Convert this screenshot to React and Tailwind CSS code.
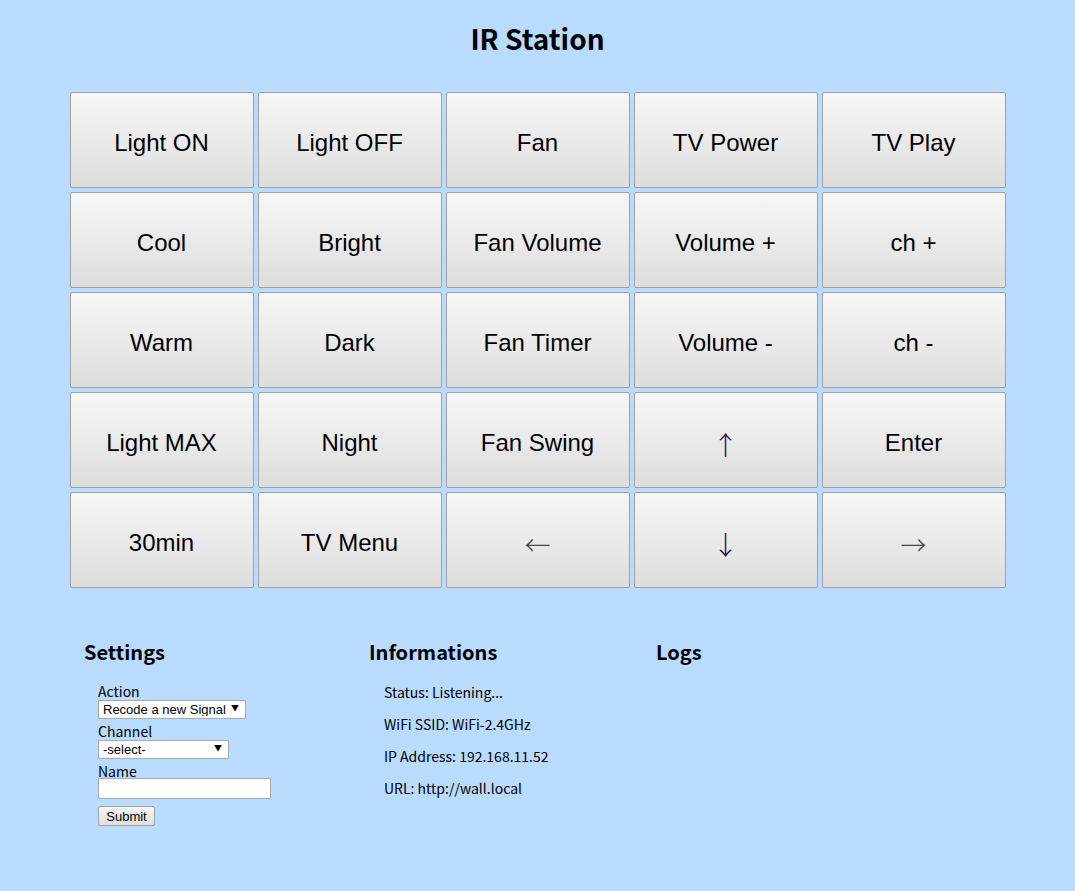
const buttons = [
  ['Light ON', 'Light OFF', 'Fan', 'TV Power', 'TV Play'],
  ['Cool', 'Bright', 'Fan Volume', 'Volume +', 'ch +'],
  ['Warm', 'Dark', 'Fan Timer', 'Volume -', 'ch -'],
  ['Light MAX', 'Night', 'Fan Swing', '↑', 'Enter'],
  ['30min', 'TV Menu', '←', '↓', '→'],
]

const arrowClass = {
  '↑': 'text-[26px] text-[#2a0a4a]',
  '↓': 'text-[26px] text-[#2a0a4a]',
  '←': 'text-[26px] text-[#444]',
  '→': 'text-[26px] text-[#444]',
}

const jp = { fontFamily: '"Noto Sans CJK JP", "DejaVu Sans", sans-serif' }
const arial = { fontFamily: '"Liberation Sans", Arial, sans-serif' }

const SelectBox = ({ value, width }) => (
  <div className={`relative h-[19px] ${width}`}>
    <select
      className="w-full h-full appearance-none bg-white border border-[#a9a9a9] pl-[4px] text-[13px] leading-none text-black"
      style={arial}
      defaultValue={value}
    >
      <option>{value}</option>
    </select>
    <span className="pointer-events-none absolute right-[7px] top-[4px] text-[8px] text-black">▼</span>
  </div>
)

export default function App() {
  return (
    <div className="min-h-screen w-full bg-[#b9dbfe] pt-[20px] pb-[40px]">
      <h1 className="text-center text-[28px] font-bold text-black leading-[36px]" style={jp}>
        IR Station
      </h1>

      {/* Remote buttons */}
      <div className="mx-auto mt-[36px] w-[936px] grid grid-cols-5 gap-[4px]">
        {buttons.flat().map((label, i) => (
          <button
            key={i}
            className={`h-[96px] pt-[6px] border border-[#a0a0a0] rounded-[2px] bg-gradient-to-b from-[#f7f7f7] to-[#dddddd] ${arrowClass[label] || 'text-[24px] text-black'}`}
            style={arrowClass[label] ? { fontFamily: '"Noto Sans CJK JP", sans-serif', fontWeight: 300 } : arial}
          >
            {label}
          </button>
        ))}
      </div>

      {/* Bottom panels */}
      <div className="flex pl-[84px] mt-[50px]">
        <div className="w-[285px]">
          <h2 className="text-[20px] font-bold text-black leading-[28px]" style={jp}>Settings</h2>
          <form className="pl-[14px] mt-[18px] flex flex-col text-[14px] text-black" style={jp} onSubmit={e => e.preventDefault()}>
            <label className="leading-[14px]">Action</label>
            <SelectBox value="Recode a new Signal" width="w-[148px]" />
            <label className="leading-[14px] mt-[7px]">Channel</label>
            <SelectBox value="-select-" width="w-[131px]" />
            <label className="leading-[14px] mt-[7px]">Name</label>
            <input type="text" className="w-[173px] h-[21px] bg-white border border-[#a9a9a9]" />
            <div className="mt-[6px]">
              <button
                type="submit"
                className="h-[20px] w-[57px] border border-[#a0a0a0] rounded-[2px] bg-gradient-to-b from-[#f6f6f6] to-[#dedede] text-[13px] text-black"
                style={arial}
              >
                Submit
              </button>
            </div>
          </form>
        </div>

        <div className="w-[287px]">
          <h2 className="text-[20px] font-bold text-black leading-[28px]" style={jp}>Informations</h2>
          <div className="pl-[15px] mt-[17px] flex flex-col gap-[14px] text-[14px] text-black leading-[18px]" style={jp}>
            <p>Status: Listening...</p>
            <p>WiFi SSID: WiFi-2.4GHz</p>
            <p>IP Address: 192.168.11.52</p>
            <p>URL: http://wall.local</p>
          </div>
        </div>

        <div>
          <h2 className="text-[20px] font-bold text-black leading-[28px]" style={jp}>Logs</h2>
        </div>
      </div>
    </div>
  )
}
